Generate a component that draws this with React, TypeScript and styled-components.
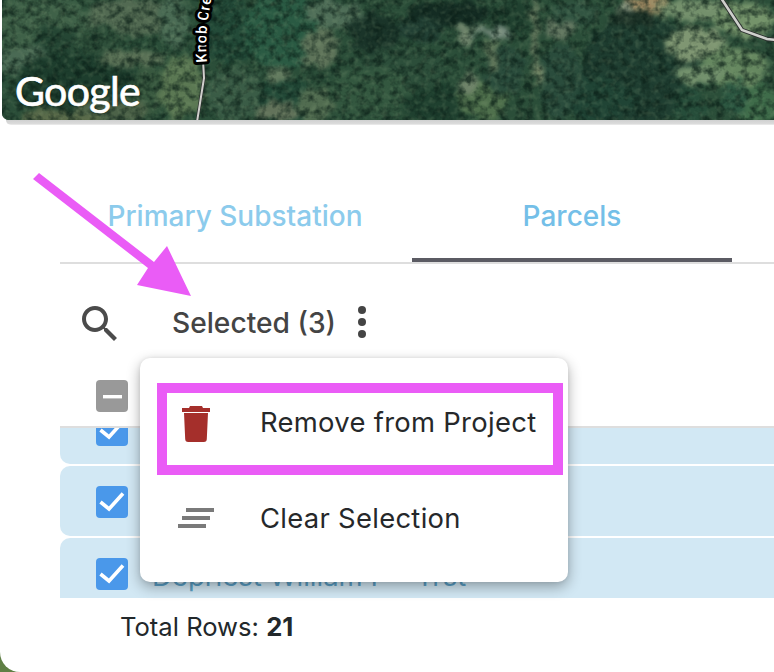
import React from "react";
import styled, { createGlobalStyle } from "styled-components";

const Global = createGlobalStyle`
  html, body { margin: 0; padding: 0; background: #fff; }
  * { box-sizing: border-box; }
`;

const Page = styled.div`
  position: relative;
  width: 774px;
  height: 672px;
  overflow: hidden;
  background: #5f7f45;
  font-family: Inter, "Liberation Sans", sans-serif;
`;

const Sheet = styled.div`
  height: 672px;
  background: #fff;
  border-bottom-left-radius: 20px;
`;

const MapFrame = styled.div`
  position: relative;
  height: 120px;
  margin-left: 2px;
  overflow: hidden;
  border-bottom-left-radius: 7px;
  background: #2a4a35;
`;

const MapShadow = styled.div`
  height: 5px;
  margin-left: 6px;
  background: linear-gradient(#cfd0d0, #dcdcdc 80%, #f4f4f4);
  border-bottom-left-radius: 6px;
`;

const GoogleMark = styled.span`
  position: absolute;
  left: 13px;
  top: 66px;
  font-family: Lato, sans-serif;
  font-size: 41px;
  line-height: 50px;
  font-weight: 400;
  letter-spacing: -0.6px;
  color: #fff;
  -webkit-text-stroke: 0.7px #fff;
  text-shadow: 0 0 2px rgba(0, 0, 0, 0.35);
`;

const Content = styled.div`
  margin-left: 60px;
`;

const TabBar = styled.div`
  display: flex;
  gap: 17px;
  height: 94px;
  margin-top: 45px;
  padding-left: 15px;
  border-bottom: 2px solid #dedede;
`;

const Tab = styled.div<{ $active?: boolean }>`
  width: 320px;
  height: 92px;
  padding-top: 4px;
  display: flex;
  align-items: center;
  justify-content: center;
  font-size: 28px;
  font-weight: 500;
  color: ${(p) => (p.$active ? "#74bfe8" : "#8ccbec")};
  border-bottom: 4px solid ${(p) => (p.$active ? "#5b5b63" : "transparent")};
`;

const Toolbar = styled.div`
  display: flex;
  align-items: center;
  height: 116px;
  padding-left: 22px;
`;

const SearchIcon = styled.svg`
  width: 35px;
  height: 35px;
  margin-top: 3px;
  fill: #4b4b4b;
`;

const SelectedLabel = styled.span`
  margin-left: 55px;
  margin-top: 1px;
  font-size: 28.2px;
  font-weight: 500;
  color: #444;
`;

const DotsIcon = styled.svg`
  width: 10px;
  height: 34px;
  margin-left: 21px;
  fill: #444;
`;

const HeaderRow = styled.div`
  height: 48px;
  padding-left: 36px;
  border-bottom: 2px solid #dedede;
`;

const Check = styled.div<{ $tone: "grey" | "blue" }>`
  width: 32px;
  height: 32px;
  flex: none;
  border-radius: 4px;
  background: ${(p) => (p.$tone === "grey" ? "#999" : "#4a98ea")};
  svg { display: block; width: 32px; height: 32px; }
`;

const Rows = styled.div`
  display: flex;
  flex-direction: column;
  gap: 2px;
`;

const Row = styled.div<{ $height: number; $first?: boolean; $last?: boolean }>`
  display: flex;
  align-items: ${(p) => (p.$first ? "flex-end" : "flex-start")};
  gap: 24px;
  height: ${(p) => p.$height}px;
  padding: ${(p) => (p.$first ? "0 0 18px 36px" : "20px 0 0 36px")};
  overflow: hidden;
  background: #d2e8f4;
  border-radius: ${(p) => (p.$first ? "0" : "10px")} 0 0 ${(p) => (p.$last ? "0" : "10px")};
`;

const RowName = styled.span`
  font-size: 27.5px;
  line-height: 36px;
  color: #5a9fc5;
  white-space: nowrap;
`;

const Footer = styled.div`
  padding-left: 60px;
  font-size: 25.6px;
  line-height: 58px;
  color: #22282b;
  b { font-weight: 700; }
`;

const Menu = styled.div`
  position: absolute;
  left: 140px;
  top: 358px;
  width: 428px;
  height: 224px;
  padding: 25px 5px 0 17px;
  background: #fff;
  border-radius: 10px;
  box-shadow: 0 5px 14px rgba(0, 0, 0, 0.32), 0 0 4px rgba(0, 0, 0, 0.08);
`;

const MenuItem = styled.div<{ $marked?: boolean }>`
  display: flex;
  align-items: center;
  height: ${(p) => (p.$marked ? 92 : 86)}px;
  padding-left: ${(p) => (p.$marked ? 15 : 21)}px;
  padding-bottom: ${(p) => (p.$marked ? 10 : 0)}px;
  border: ${(p) => (p.$marked ? "10px solid #ea5cf6" : "none")};
  font-size: 27.4px;
  letter-spacing: 0.3px;
  color: #26282a;
  white-space: nowrap;
`;

const MenuLabel = styled.span<{ $lift: number }>`
  margin-bottom: ${(p) => p.$lift}px;
`;

const MenuIcon = styled.span<{ $width: number; $gap: number }>`
  display: block;
  flex: none;
  width: ${(p) => p.$width}px;
  margin-right: ${(p) => p.$gap}px;
  svg { display: block; }
`;

const ArrowLayer = styled.svg`
  position: absolute;
  left: 0;
  top: 0;
  width: 774px;
  height: 672px;
  pointer-events: none;
`;

type Patch = [number, number, number, number, string];

const patches: Patch[] = [
  [40, 25, 60, 28, "#3f6148"], [20, 60, 30, 14, "#4a6a54"], [75, 82, 62, 30, "#1d3d2d"],
  [55, 40, 20, 16, "#254634"], [130, 18, 42, 20, "#526a52"], [100, 42, 22, 14, "#2e4f3a"],
  [135, 58, 32, 9, "#5a7156"], [150, 90, 16, 24, "#38583f"], [182, 88, 22, 32, "#5b7853"],
  [175, 20, 14, 30, "#4a6b54"], [110, 112, 40, 12, "#4c6248"], [60, 118, 40, 8, "#5a6b4a"],
  [230, 30, 32, 34, "#234a38"], [235, 95, 28, 28, "#3a5c46"], [285, 30, 40, 40, "#2a5a43"],
  [285, 100, 26, 26, "#234a38"], [278, 74, 12, 7, "#647c60"], [320, 48, 18, 20, "#5f745a"],
  [335, 14, 30, 14, "#4f6e58"], [278, 112, 20, 10, "#62725a"], [315, 105, 18, 18, "#516c50"],
  [375, 32, 26, 20, "#1a3429"], [400, 70, 48, 22, "#2c4e3a"], [370, 92, 40, 26, "#33573f"],
  [440, 105, 38, 18, "#1f402f"], [450, 14, 42, 12, "#142c23"], [420, 30, 24, 12, "#224034"],
  [482, 100, 24, 20, "#4f704c"], [468, 86, 8, 10, "#70846a"], [492, 50, 8, 14, "#5a7456"],
  [505, 70, 20, 22, "#2a4c3c"], [510, 16, 18, 18, "#20402f"], [575, 14, 26, 12, "#325542"],
  [640, 70, 58, 56, "#1f3e31"], [600, 100, 36, 24, "#204435"], [560, 80, 22, 36, "#2a4c3c"],
  [560, 30, 16, 10, "#5f735e"], [650, 4, 24, 9, "#a08a62"], [625, 12, 10, 6, "#8a9680"],
  [632, 18, 22, 8, "#1f3429"], [690, 10, 35, 11, "#74906c"], [694, 43, 30, 17, "#7f9672"],
  [745, 20, 30, 18, "#74936a"], [735, 68, 34, 20, "#668860"], [700, 75, 22, 9, "#72906c"],
  [690, 105, 18, 20, "#264d3a"], [755, 106, 24, 22, "#3f6c4a"], [735, 98, 12, 18, "#2d5842"],
];

const rects: [number, number, number, number, string][] = [
  [458, 26, 16, 20, "#72876e"], [476, 28, 32, 7, "#7c9082"], [489, 45, 8, 28, "#60765a"],
  [532, 0, 6, 70, "#66795e"], [535, 68, 8, 14, "#788868"],
];

const MapArt = () => (
  <svg width="772" height="120" viewBox="2 0 772 120" style={{ display: "block" }}>
    <defs>
      <filter id="rough" x="-5%" y="-5%" width="110%" height="110%" colorInterpolationFilters="sRGB">
        <feTurbulence type="fractalNoise" baseFrequency="0.09" numOctaves="3" seed="7" />
        <feDisplacementMap in="SourceGraphic" scale="18" xChannelSelector="R" yChannelSelector="G" />
        <feGaussianBlur stdDeviation="2" />
      </filter>
      <filter id="shade" x="0" y="0" width="100%" height="100%" colorInterpolationFilters="sRGB">
        <feTurbulence type="fractalNoise" baseFrequency="0.12" numOctaves="3" seed="11" />
        <feColorMatrix values="0 0 0 0 0.04  0 0 0 0 0.12  0 0 0 0 0.09  2.6 0 0 0 -1.05" />
        <feGaussianBlur stdDeviation="0.7" />
      </filter>
      <filter id="light" x="0" y="0" width="100%" height="100%" colorInterpolationFilters="sRGB">
        <feTurbulence type="fractalNoise" baseFrequency="0.17" numOctaves="2" seed="23" />
        <feColorMatrix values="0 0 0 0 0.55  0 0 0 0 0.65  0 0 0 0 0.5  0 2.6 0 0 -1.2" />
        <feGaussianBlur stdDeviation="0.7" />
      </filter>
    </defs>
    <rect x="2" y="0" width="772" height="120" fill="#2b4e39" />
    <g filter="url(#rough)">
      {patches.map(([cx, cy, rx, ry, fill], i) => (
        <ellipse key={i} cx={cx} cy={cy} rx={rx} ry={ry} fill={fill} />
      ))}
      {rects.map(([x, y, w, h, fill], i) => (
        <rect key={i} x={x} y={y} width={w} height={h} fill={fill} />
      ))}
    </g>
    <rect x="2" y="0" width="772" height="120" filter="url(#shade)" opacity="0.7" />
    <rect x="2" y="0" width="772" height="120" filter="url(#light)" opacity="0.2" />
    <path d="M721 -2 L742 30 L767 39 L776 40" fill="none" stroke="#2d3230" strokeWidth="4.5" />
    <path d="M721 -2 L742 30 L767 39 L776 40" fill="none" stroke="#cfd0cc" strokeWidth="2.6" />
    <path d="M203 60 L204 78 L197 122" fill="none" stroke="#2d3230" strokeWidth="3.4" />
    <path d="M203 60 L204 78 L197 122" fill="none" stroke="#d0d0cc" strokeWidth="2" />
    <path id="knob" d="M207 62 Q204 34 212 -4" fill="none" />
    <text
      fontFamily="Roboto, sans-serif"
      fontSize="15"
      fontWeight="500"
      letterSpacing="0.5"
      fill="#fff"
      stroke="#000"
      strokeWidth="6"
      strokeLinejoin="round"
      paintOrder="stroke"
    >
      <textPath href="#knob">Knob Cre</textPath>
    </text>
  </svg>
);

const CheckMark = () => (
  <svg viewBox="0 0 32 32">
    <path d="M4.5 16 L13 23 L27 7.5" fill="none" stroke="#fff" strokeWidth="3.6" />
  </svg>
);

export default function App() {
  return (
    <Page>
      <Global />
      <Sheet>
        <MapFrame>
          <MapArt />
          <GoogleMark>Google</GoogleMark>
        </MapFrame>
        <MapShadow />
        <Content>
          <TabBar>
            <Tab>Primary Substation</Tab>
            <Tab $active>Parcels</Tab>
          </TabBar>
          <Toolbar>
            <SearchIcon viewBox="3 3 17.5 17.5">
              <path d="M15.5 14h-.79l-.28-.27C15.41 12.59 16 11.11 16 9.5 16 5.91 13.09 3 9.5 3S3 5.91 3 9.5 5.91 16 9.5 16c1.61 0 3.09-.59 4.23-1.57l.27.28v.79l5 4.99L20.49 19l-4.99-5zm-6 0C7.01 14 5 11.99 5 9.5S7.01 5 9.5 5 14 7.01 14 9.5 11.99 14 9.5 14z" />
            </SearchIcon>
            <SelectedLabel>Selected (3)</SelectedLabel>
            <DotsIcon viewBox="0 0 10 34">
              <circle cx="5" cy="5" r="4" />
              <circle cx="5" cy="17" r="4" />
              <circle cx="5" cy="29" r="4" />
            </DotsIcon>
          </Toolbar>
          <HeaderRow>
            <Check $tone="grey">
              <svg viewBox="0 0 32 32">
                <rect x="7" y="15" width="19" height="3.4" fill="#fff" />
              </svg>
            </Check>
          </HeaderRow>
          <Rows>
            <Row $height={36} $first>
              <Check $tone="blue"><CheckMark /></Check>
            </Row>
            <Row $height={70}>
              <Check $tone="blue"><CheckMark /></Check>
            </Row>
            <Row $height={60} $last>
              <Check $tone="blue"><CheckMark /></Check>
              <RowName>Depriest William P - Trst</RowName>
            </Row>
          </Rows>
          <Footer>Total Rows: <b>21</b></Footer>
        </Content>
      </Sheet>
      <Menu>
        <MenuItem $marked>
          <MenuIcon $width={28} $gap={50}>
            <svg width="28" height="36" viewBox="0 0 28 36" fill="#a52f2b">
              <path d="M8 0h12l1 2h7v4H0V2h7z" />
              <path d="M2 7h24l-1.2 26a3 3 0 0 1-3 3H6.2a3 3 0 0 1-3-3z" />
            </svg>
          </MenuIcon>
          <MenuLabel $lift={4}>Remove from Project</MenuLabel>
        </MenuItem>
        <MenuItem>
          <MenuIcon $width={36} $gap={46}>
            <svg width="36" height="20" viewBox="0 0 36 20" fill="#7a7a7a">
              <rect x="8" y="0" width="28" height="4" />
              <rect x="4" y="8" width="28" height="4" />
              <rect x="0" y="16" width="28" height="4" />
            </svg>
          </MenuIcon>
          <MenuLabel $lift={0}>Clear Selection</MenuLabel>
        </MenuItem>
      </Menu>
      <ArrowLayer viewBox="0 0 774 672">
        <polygon points="39,173 154,262 167,246 191,296 137,285 148,268 33,179" fill="#ea5cf6" />
      </ArrowLayer>
    </Page>
  );
}
